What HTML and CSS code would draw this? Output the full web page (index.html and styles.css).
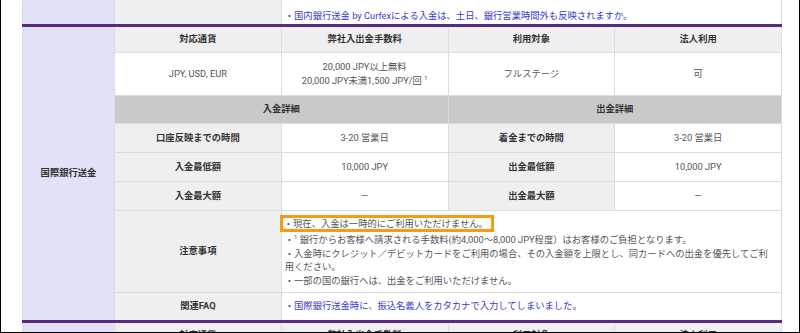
FILE: index.html
```html
<!DOCTYPE html>
<html lang="ja">
<head>
<meta charset="utf-8">
<link rel="stylesheet" href="styles.css">
</head>
<body>
<div class="frame">
  <table class="spec">
    <colgroup>
      <col class="c-cat"><col class="c-col"><col class="c-col"><col class="c-col"><col class="c-col">
    </colgroup>
    <tr class="r-top">
      <td class="cat"></td>
      <td class="label"></td>
      <td class="faq top-faq" colspan="3"><a class="link">・国内銀行送金 by Curfexによる入金は、土日、銀行営業時間外も反映されますか。</a></td>
    </tr>
    <tr class="r-head sec">
      <td class="cat" rowspan="8">国際銀行送金</td>
      <td class="label">対応通貨</td>
      <td class="label">弊社入出金手数料</td>
      <td class="label">利用対象</td>
      <td class="label">法人利用</td>
    </tr>
    <tr class="r-vals">
      <td class="val">JPY, USD, EUR</td>
      <td class="val">20,000 JPY以上無料<br>20,000 JPY未満1,500 JPY/回 <sup>1</sup></td>
      <td class="val">フルステージ</td>
      <td class="val">可</td>
    </tr>
    <tr class="r-sub">
      <td class="subhead" colspan="2">入金詳細</td>
      <td class="subhead" colspan="2">出金詳細</td>
    </tr>
    <tr class="r-std">
      <td class="label">口座反映までの時間</td>
      <td class="val">3-20 営業日</td>
      <td class="label">着金までの時間</td>
      <td class="val">3-20 営業日</td>
    </tr>
    <tr class="r-std">
      <td class="label">入金最低額</td>
      <td class="val">10,000 JPY</td>
      <td class="label">出金最低額</td>
      <td class="val">10,000 JPY</td>
    </tr>
    <tr class="r-std">
      <td class="label">入金最大額</td>
      <td class="val">—</td>
      <td class="label">出金最大額</td>
      <td class="val">—</td>
    </tr>
    <tr class="r-notes">
      <td class="label">注意事項</td>
      <td class="notes" colspan="3">
        <span class="mark">・現在、入金は一時的にご利用いただけません。</span><br>
        ・<sup>1</sup> 銀行からお客様へ請求される手数料(約4,000～8,000 JPY程度）はお客様のご負担となります。<br>
        ・入金時にクレジット／デビットカードをご利用の場合、その入金額を上限とし、同カードへの出金を優先してご利用ください。<br>
        ・一部の国の銀行へは、出金をご利用いただけません。
      </td>
    </tr>
    <tr class="r-faq">
      <td class="label">関連FAQ</td>
      <td class="faq" colspan="3"><a class="link">・国際銀行送金時に、振込名義人をカタカナで入力してしまいました。</a></td>
    </tr>
    <tr class="r-head sec">
      <td class="cat"></td>
      <td class="label">対応通貨</td>
      <td class="label">弊社入出金手数料</td>
      <td class="label">利用対象</td>
      <td class="label">法人利用</td>
    </tr>
  </table>
</div>
</body>
</html>
```

FILE: styles.css
```css
html, body {
  margin: 0;
  padding: 0;
  background: #fff;
}

.frame {
  box-sizing: border-box;
  width: 800px;
  height: 333px;
  overflow: hidden;
  border-left: 1px solid #000;
  border-right: 1px solid #000;
  border-bottom: 1px solid #000;
  padding: 0 18px 0 21px;
}

.spec {
  width: 759px;
  border-collapse: collapse;
  table-layout: fixed;
  font-family: Roboto, "Noto Sans CJK JP", sans-serif;
  font-size: 9.3px;
  line-height: 14px;
  color: #555;
}

.c-cat { width: 92px; }
.c-col { width: 166.75px; }

.spec td {
  border: 1px solid #dcdcdc;
  padding: 0 3px;
  text-align: center;
  vertical-align: middle;
}

.spec tr.r-top td {
  border-top: none;
}

.spec tr.sec td {
  border-top: 3px solid #5a2a82;
}

.spec td.cat {
  background: #e1e1f7;
  color: #333;
  font-weight: bold;
}

.spec td.label {
  background: #efefef;
  color: #333;
  font-weight: bold;
}

.spec td.val {
  background: #fff;
}

.spec td.subhead {
  background: #c9c9c9;
  color: #333;
  font-weight: bold;
}

.spec td.notes,
.spec td.faq {
  text-align: left;
  background: #fff;
  padding-right: 10px;
}

.spec td.top-faq {
  vertical-align: top;
  padding-top: 9px;
}

.r-top { height: 25px; }
.r-head { height: 27px; }
.r-vals { height: 43px; }
.r-sub { height: 28px; }
.r-std { height: 29px; }
.r-notes { height: 82px; }
.r-faq { height: 29px; }

.link {
  color: #3a3acc;
  text-decoration: none;
}

sup {
  font-size: 6px;
  line-height: 0;
  vertical-align: 4px;
}

.notes {
  line-height: 13.5px;
}

.mark {
  display: inline-block;
  border: 3px solid #fb9a12;
  padding: 0 3px 0 1px;
  margin: 0 0 1px -5px;
  line-height: 11px;
}
```
